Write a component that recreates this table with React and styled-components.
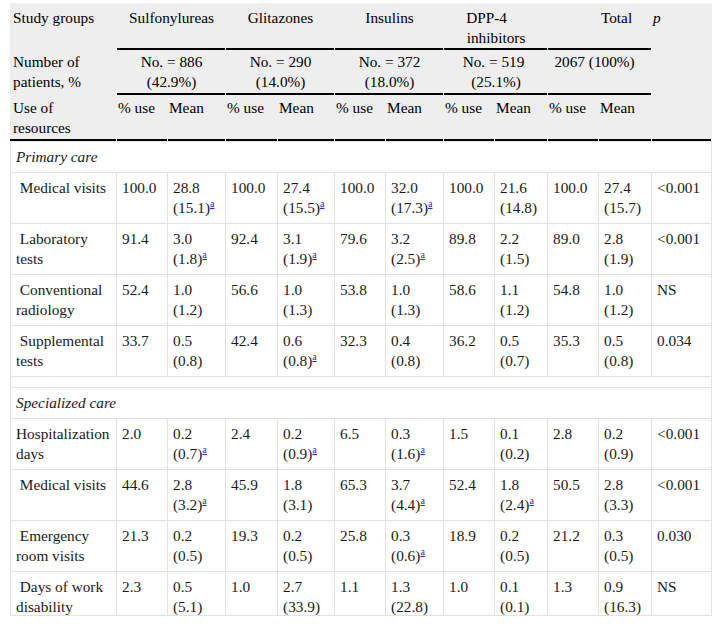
import React from "react";
import styled, { createGlobalStyle, css } from "styled-components";

const GlobalStyle = createGlobalStyle`
  body {
    margin: 0;
    background: #fff;
    font-family: "Liberation Serif", "Times New Roman", serif;
  }
`;

const widths = [107, 51, 58, 52, 57, 51, 58, 51, 53, 51, 53, 60];

const groups = [
  { name: "Sulfonylureas", n: "No. = 886", pct: "(42.9%)" },
  { name: "Glitazones", n: "No. = 290", pct: "(14.0%)" },
  { name: "Insulins", n: "No. = 372", pct: "(18.0%)" },
  { name: "DPP-4 inhibitors", n: "No. = 519", pct: "(25.1%)", shift: true },
];

// [label, then pairs of % use / mean (sd) with footnote flag, then p]
const primary = [
  ["\u00a0Medical visits", "100.0", ["28.8", "15.1", 1], "100.0", ["27.4", "15.5", 1], "100.0", ["32.0", "17.3", 1], "100.0", ["21.6", "14.8"], "100.0", ["27.4", "15.7"], "<0.001"],
  ["\u00a0Laboratory tests", "91.4", ["3.0", "1.8", 1], "92.4", ["3.1", "1.9", 1], "79.6", ["3.2", "2.5", 1], "89.8", ["2.2", "1.5"], "89.0", ["2.8", "1.9"], "<0.001"],
  ["\u00a0Conventional radiology", "52.4", ["1.0", "1.2"], "56.6", ["1.0", "1.3"], "53.8", ["1.0", "1.3"], "58.6", ["1.1", "1.2"], "54.8", ["1.0", "1.2"], "NS"],
  ["\u00a0Supplemental tests", "33.7", ["0.5", "0.8"], "42.4", ["0.6", "0.8", 1], "32.3", ["0.4", "0.8"], "36.2", ["0.5", "0.7"], "35.3", ["0.5", "0.8"], "0.034"],
];

const specialized = [
  ["Hospitalization days", "2.0", ["0.2", "0.7", 1], "2.4", ["0.2", "0.9", 1], "6.5", ["0.3", "1.6", 1], "1.5", ["0.1", "0.2"], "2.8", ["0.2", "0.9"], "<0.001"],
  ["\u00a0Medical visits", "44.6", ["2.8", "3.2", 1], "45.9", ["1.8", "3.1"], "65.3", ["3.7", "4.4", 1], "52.4", ["1.8", "2.4", 1], "50.5", ["2.8", "3.3"], "<0.001"],
  ["\u00a0Emergency room visits", "21.3", ["0.2", "0.5"], "19.3", ["0.2", "0.5"], "25.8", ["0.3", "0.6", 1], "18.9", ["0.2", "0.5"], "21.2", ["0.3", "0.5"], "0.030"],
  ["\u00a0Days of work disability", "2.3", ["0.5", "5.1"], "1.0", ["2.7", "33.9"], "1.1", ["1.3", "22.8"], "1.0", ["0.1", "0.1"], "1.3", ["0.9", "16.3"], "NS"],
];

const Frame = styled.div`
  margin: 3px 0 0 10px;
  width: 702px;
  height: 612px;
  overflow: hidden;
  border-bottom: 1px solid #e3e3e3;
`;

const Table = styled.table`
  width: 702px;
  table-layout: fixed;
  border-collapse: separate;
  border-spacing: 0;
  font-family: "Liberation Serif", "Times New Roman", serif;
  font-size: 15.3px;
  line-height: 20px;
  color: #1a1a1a;
`;

const Head = styled.th`
  background-color: #eeeeee;
  font-weight: normal;
  text-align: ${(p) => (p.$center ? "center" : "left")};
  vertical-align: top;
  padding: ${(p) => p.$pad || "0 1px"};
  color: #000;
  ${(p) =>
    p.$rule &&
    css`
      background-image: linear-gradient(#000, #000);
      background-size: calc(100% - 1px) 2px;
      background-position: left bottom;
      background-repeat: no-repeat;
    `}
  ${(p) => p.$italic && "font-style: italic;"}
`;

const Row = styled.tr`
  &:first-child td {
    border-top: 1px solid #e3e3e3;
  }
`;

const Cell = styled.td`
  vertical-align: top;
  padding: 5px;
  border-right: 1px solid #e3e3e3;
  border-bottom: 1px solid #e3e3e3;
  &:first-child {
    border-left: 1px solid #e3e3e3;
  }
`;

const Section = styled(Cell)`
  font-style: italic;
`;

const Spacer = styled(Cell)`
  height: 0;
  padding: 5px 0;
`;

const Note = styled.a`
  font-size: 10px;
  line-height: 0;
  vertical-align: super;
  color: #2a2aff;
  text-decoration: underline;
`;

const Shifted = styled.span`
  display: inline-block;
  padding-right: ${(p) => p.$right || 0}px;
  padding-left: ${(p) => p.$left || 0}px;
`;

const Mean = ({ v }) => (
  <>
    {v[0]} ({v[1]})
    {v[2] ? <Note href="#">a</Note> : null}
  </>
);

const BodyRow = ({ r }) => (
  <Row>
    {r.map((c, i) => (
      <Cell key={i}>{Array.isArray(c) ? <Mean v={c} /> : c}</Cell>
    ))}
  </Row>
);

const App = () => (
  <>
    <GlobalStyle />
    <Frame>
      <Table>
        <colgroup>
          {widths.map((w, i) => (
            <col key={i} style={{ width: w }} />
          ))}
        </colgroup>
        <thead>
          <tr>
            <Head $pad="5px 3px 2px">Study groups</Head>
            {groups.map((g) => (
              <Head key={g.name} colSpan={2} $center $rule $pad="5px 1px 2px">
                {g.shift ? (
                  <>
                    <Shifted $right={19}>DPP-4</Shifted> inhibitors
                  </>
                ) : (
                  g.name
                )}
              </Head>
            ))}
            <Head colSpan={2} $center $rule $pad="5px 1px 2px 34px">
              Total
            </Head>
            <Head rowSpan={2} $italic $pad="5px 1px 2px 1px">
              p
            </Head>
          </tr>
          <tr>
            <Head $pad="2px 3px 3px">Number of patients, %</Head>
            {groups.map((g) => (
              <Head key={g.name} colSpan={2} $center $rule $pad="2px 1px 3px">
                {g.shift ? (
                  <>
                    <Shifted $right={5}>{g.n}</Shifted> {g.pct}
                  </>
                ) : (
                  <>
                    {g.n} {g.pct}
                  </>
                )}
              </Head>
            ))}
            <Head colSpan={2} $center $rule $pad="2px 12px 3px 1px">
              2067 (100%)
            </Head>
          </tr>
          <tr>
            <Head $rule $pad="3px 3px 3px">Use of resources</Head>
            {groups.map((g) => (
              <React.Fragment key={g.name}>
                <Head $rule $pad="3px 1px 3px">% use</Head>
                <Head $rule $pad="3px 1px 3px">Mean</Head>
              </React.Fragment>
            ))}
            <Head $rule $pad="3px 1px 3px">% use</Head>
            <Head $rule $pad="3px 1px 3px">Mean</Head>
            <Head $rule $pad="3px 1px 3px" />
          </tr>
        </thead>
        <tbody>
          <Row>
            <Section colSpan={12}>Primary care</Section>
          </Row>
          {primary.map((r, i) => (
            <BodyRow key={i} r={r} />
          ))}
          <Row>
            <Spacer colSpan={12} />
          </Row>
          <Row>
            <Section colSpan={12}>Specialized care</Section>
          </Row>
          {specialized.map((r, i) => (
            <BodyRow key={i} r={r} />
          ))}
        </tbody>
      </Table>
    </Frame>
  </>
);

export default App;
